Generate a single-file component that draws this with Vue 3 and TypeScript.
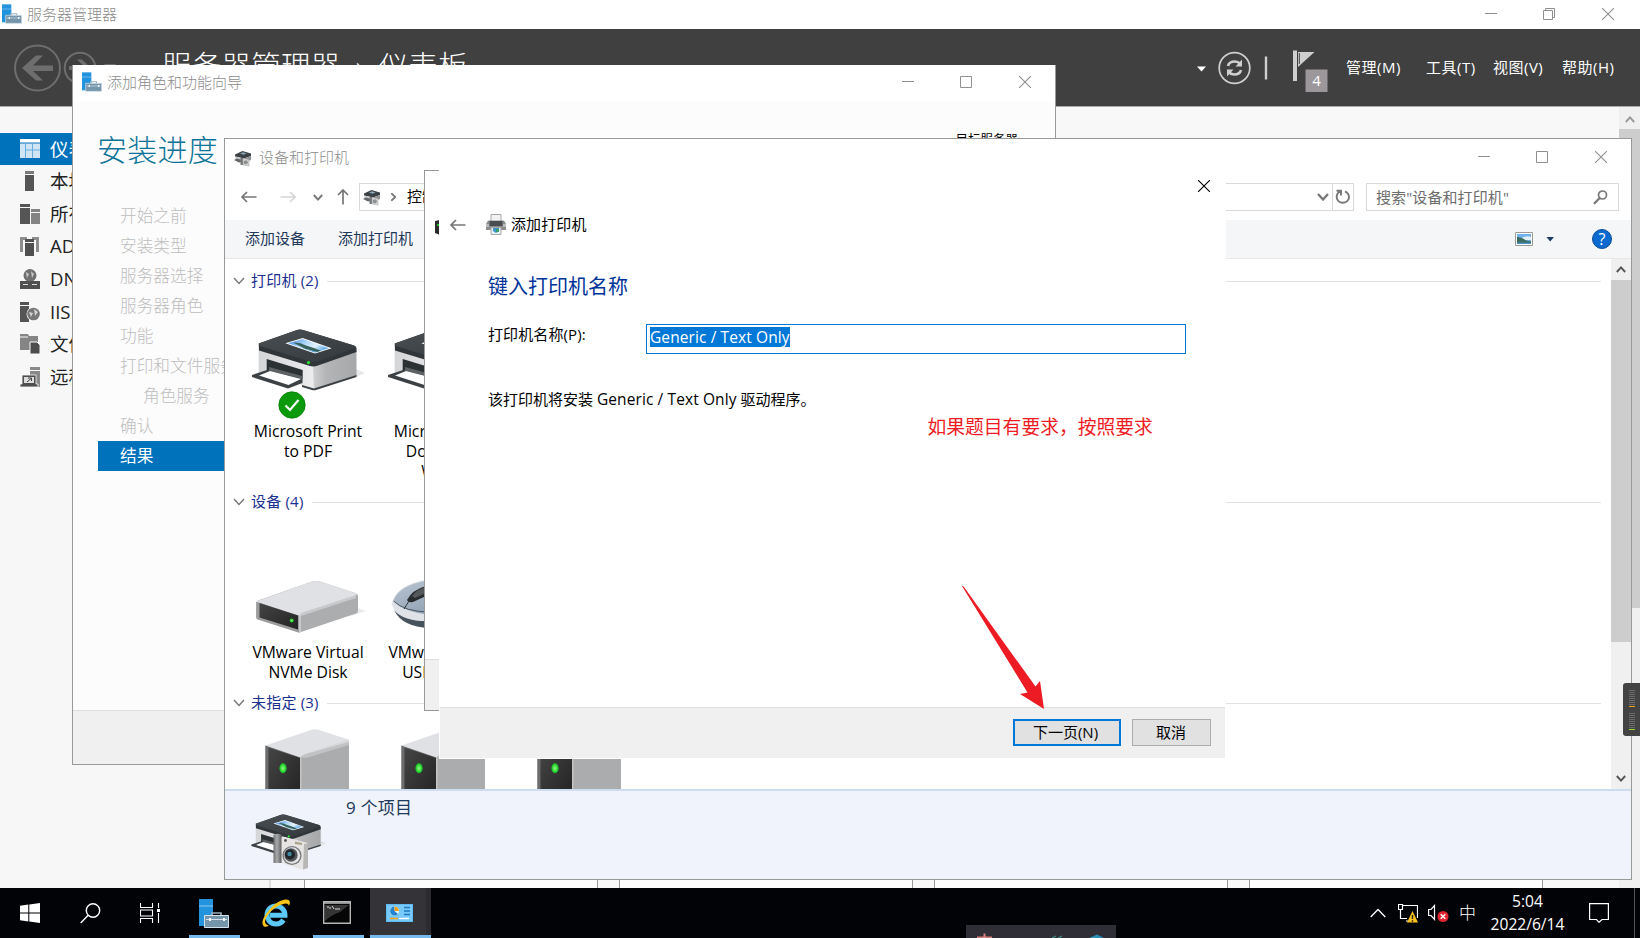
<script setup lang="ts">
import { ref } from 'vue'

interface NavItem { label: string; icon: string; active?: boolean }
interface Step { label: string; sub?: boolean; active?: boolean }
interface Device { icon: string; lines: string[]; isDefault?: boolean }
interface Group { id: string; title: string; devices: Device[] }

const navItems: NavItem[] = [
  { label: '仪表板', icon: 'dash', active: true },
  { label: '本地服务器', icon: 'local' },
  { label: '所有服务器', icon: 'all' },
  { label: 'AD DS', icon: 'ad' },
  { label: 'DNS', icon: 'dns' },
  { label: 'IIS', icon: 'iis' },
  { label: '文件和存储服务', icon: 'files' },
  { label: '远程桌面服务', icon: 'remote' },
]

const steps: Step[] = [
  { label: '开始之前' },
  { label: '安装类型' },
  { label: '服务器选择' },
  { label: '服务器角色' },
  { label: '功能' },
  { label: '打印和文件服务' },
  { label: '角色服务', sub: true },
  { label: '确认' },
  { label: '结果', active: true },
]

const groups: Group[] = [
  {
    id: 'printers',
    title: '打印机 (2)',
    devices: [
      { icon: 'printer', lines: ['Microsoft Print', 'to PDF'], isDefault: true },
      { icon: 'printer', lines: ['Microsoft XPS', 'Document', 'Writer'] },
    ],
  },
  {
    id: 'hardware',
    title: '设备 (4)',
    devices: [
      { icon: 'disk', lines: ['VMware Virtual', 'NVMe Disk'] },
      { icon: 'mouse', lines: ['VMware Virtual', 'USB Mouse'] },
    ],
  },
  {
    id: 'unspecified',
    title: '未指定 (3)',
    devices: [
      { icon: 'tower', lines: [] },
      { icon: 'tower', lines: [] },
      { icon: 'tower', lines: [] },
    ],
  },
]

const menus = ['管理(M)', '工具(T)', '视图(V)', '帮助(H)']
const printerName = ref('Generic / Text Only')
const iconHeights: Record<string, number> = { printer: 66, disk: 58, mouse: 58, tower: 64 }
</script>

<template>
  <div class="desktop">
    <svg class="defs" width="0" height="0">
      <defs>
        <linearGradient id="gTop" x1="0" y1="0" x2="1" y2="1">
          <stop offset="0" stop-color="#4a4f53" /><stop offset="1" stop-color="#32383b" />
        </linearGradient>
        <linearGradient id="gPhoto" x1="0" y1="0" x2="1" y2="0.4">
          <stop offset="0" stop-color="#3d86e0" /><stop offset="0.45" stop-color="#a9d4f8" />
          <stop offset="0.75" stop-color="#e4f3fd" /><stop offset="1" stop-color="#6db2e8" />
        </linearGradient>
        <linearGradient id="gFront" x1="0" y1="0" x2="1" y2="0">
          <stop offset="0" stop-color="#d4d5d6" /><stop offset="1" stop-color="#ececee" />
        </linearGradient>
        <linearGradient id="gSide" x1="0" y1="0" x2="1" y2="0">
          <stop offset="0" stop-color="#cfd0d2" /><stop offset="0.3" stop-color="#b4b5b7" /><stop offset="1" stop-color="#a6a7a9" />
        </linearGradient>
        <linearGradient id="gDark" x1="0" y1="0" x2="1" y2="1">
          <stop offset="0" stop-color="#454545" /><stop offset="1" stop-color="#222" />
        </linearGradient>
        <linearGradient id="gMouse" x1="0" y1="0" x2="1" y2="1">
          <stop offset="0" stop-color="#bac6d3" /><stop offset="1" stop-color="#7f92a8" />
        </linearGradient>
        <linearGradient id="gGrip" x1="0" y1="0" x2="1" y2="0">
          <stop offset="0" stop-color="#6d6e70" /><stop offset="0.4" stop-color="#a9aaab" /><stop offset="1" stop-color="#58595b" />
        </linearGradient>
        <radialGradient id="gLed"><stop offset="0" stop-color="#8dff7a" /><stop offset="1" stop-color="#0bc21a" /></radialGradient>
      </defs>
      <symbol id="printer" viewBox="250 326 116 66">
        <path d="M354 368L365 373L356 377L330 384Z" fill="#d9d9d9" opacity=".6" />
        <path d="M258.7 348L314 365V389L301 385V371L267 360V371L258.7 373Z" fill="url(#gFront)" />
        <path d="M313 365L356.5 350V376L314 389.5Z" fill="url(#gSide)" />
        <path d="M302 385L314 388.5L356.5 375V377L316 390Q314 390.5 312 390L302 387Z" fill="#3a4044" />
        <path d="M266.7 359L302.7 370V379L266.7 371Z" fill="#2c3134" />
        <path d="M269 367L302 376V379L269 371Z" fill="#5d6264" />
        <path d="M252 375L267 370L302.5 379V383L288 388.5L252 377Z" fill="#3b4145" />
        <path d="M259 375.5L270 371L301 379L288.5 385Z" fill="#fff" />
        <path d="M258.7 343.5L297 330Q300 329 303 330L354 345.5Q356.5 346.5 356.5 348V352L318 365.5Q314 367 310 366L259 350.5Z" fill="#2f3538" />
        <path d="M258.7 343.5L297 330Q300 329 303 330L354 345.5Q357 347 355 348L318 361.5Q314 362.5 310 361.5L260 346Z" fill="url(#gTop)" />
        <path d="M285.3 343.3L302.7 338L331.7 348.3L315 353.5Z" fill="#fff" />
        <path d="M288 343.2L302.6 339L329 348.2L315 352.4Z" fill="url(#gPhoto)" />
        <path d="M293 342.5Q300 342 306 345.5Q313 347.5 321 350.7L317 352L305 348.8Z" fill="#37635a" />
        <path d="M305 348.8L317 352L315 352.4L299 347Z" fill="#4c9bd8" />
        <circle cx="308.5" cy="362.6" r="1.6" fill="#2ee62e" />
      </symbol>
      <symbol id="photoset" viewBox="0 0 77 58">
        <use href="#printer" x="0" y="0" width="77" height="44" />
        <g transform="translate(0 2)">
          <path d="M23.5 21Q28 18.5 32 21V49H23.5Z" fill="url(#gGrip)" />
          <path d="M31.5 23.5Q33 22.5 35 23L56 28.5Q58 29.5 58 30.5V54L52 55.5L31.5 49Z" fill="#e6e5e3" />
          <path d="M54 30L58 29.5V54L53 55.5Z" fill="#b9b7b5" />
          <path d="M45 27.5L52 29V31L45 30Z" fill="#a9a288" />
          <circle cx="35.5" cy="26.5" r="1.4" fill="#555" />
          <circle cx="42" cy="41.5" r="9.6" fill="#77797c" /><circle cx="42" cy="41.5" r="8.2" fill="#e6e7e8" />
          <circle cx="41" cy="41" r="6.7" fill="#55585b" /><circle cx="40" cy="40.5" r="5" fill="#20262a" />
          <circle cx="39.5" cy="40" r="2.2" fill="#3e8ba0" />
        </g>
      </symbol>
      <symbol id="smallset" viewBox="0 0 18 18">
        <path d="M1 5.5L8.5 2L17 4.5V7L10 9.5L1 7.5Z" fill="#3b4145" />
        <path d="M6 4.5L9 3.3L12.5 4.5L9.5 5.8Z" fill="#8da7b8" />
        <path d="M1.5 7.5L10 9.5V13L1.5 10.5Z" fill="#c9cacb" />
        <path d="M10 9.5L17 7V11L10 13.5Z" fill="#909193" />
        <path d="M0 11L3 9.5L8 11V13L5 13.5Z" fill="#63676a" />
        <path d="M6.5 9H9V16H6.5Z" fill="#77787a" />
        <path d="M9 9.5L15 10.5V17L9 16Z" fill="#dedddb" stroke="#999" stroke-width=".5" />
        <circle cx="11.8" cy="13.3" r="2.1" fill="#8b8f91" />
      </symbol>
      <symbol id="disk" viewBox="250 578 116 58">
        <path d="M355 607L366 611L350 616Z" fill="#ddd" opacity=".6" />
        <path d="M256 603Q256 601 258 600.5L313 581.3Q316 580.5 319 581.3L355 593Q358 594 358 596V611Q358 613 356 613.6L301 632Q299 633 297 632L258 619.5Q256 619 256 617Z" fill="#acadaf" />
        <path d="M256 601.5L313 581.3Q316 580.5 319 581.3L356 593.3Q358 595 353 597.5L303 613.5Q300 615 299.5 617Z" fill="#e0e1e5" />
        <path d="M299 616Q300 613 304 612L356 595V598L301 616V632L299 632.5Z" fill="#c8c9cb" />
        <path d="M256.5 602L299 615.5V632.5L258 619.5Q256.5 619 256.5 617Z" fill="#9b9c9e" />
        <path d="M259.5 603L298 615.5V629.5L259.5 617.5Z" fill="url(#gDark)" />
        <circle cx="291.7" cy="620.5" r="2" fill="url(#gLed)" />
      </symbol>
      <symbol id="mouse" viewBox="386 574 116 58">
        <path d="M391.5 600Q396 580 430 575L480 590V624H424Q400 620 391.5 600Z" fill="#dfe3e8" />
        <path d="M394 606Q404 618 430 617V624Q402 623 394 606Z" fill="#46525c" />
        <path d="M393.5 597Q398 581 430 576L480 590V610H424Q400 606 393.5 597Z" fill="url(#gMouse)" />
        <path d="M393.5 597Q405 608 430 608" fill="none" stroke="#39434c" stroke-width=".8" />
        <path d="M409 597L404 605" stroke="#2f363c" stroke-width="1" />
        <path d="M407 596Q412 586 426 582V592L413 598Q408 599 407 596Z" fill="#292c2e" />
        <path d="M412 592Q416 586 426 583V589L415 594Z" fill="#55595c" />
      </symbol>
      <symbol id="tower" viewBox="250 727 116 64">
        <path d="M265.3 745.5L311 730Q315 728.5 319 730L347 739Q349 740 349 742V800H265.3Z" fill="#e0e1e4" />
        <path d="M300.5 757.5Q302 755 306 754L349 742V800H300.5Z" fill="#abacae" />
        <path d="M300.5 757.5Q302 755 306 753.5L349 739.5V745L306 758Z" fill="#cfd0d2" opacity=".6" />
        <path d="M265.3 745.5L300.5 757.5V800H265.3Z" fill="#6b6c6d" />
        <path d="M268.5 747.5L300 758V800H268.5Z" fill="url(#gDark)" />
        <path d="M300.8 757.5V800" stroke="#d8d8d8" stroke-width="1" />
        <ellipse cx="283" cy="768.3" rx="3.6" ry="5" fill="url(#gLed)" />
      </symbol>
      <symbol id="server" viewBox="0 0 30 29">
        <path d="M0 0H14V27H0Z" fill="#2493de" /><path d="M0 7H14" stroke="#8ec9f0" stroke-width="1" />
        <path d="M13 17V14H22V17" fill="none" stroke="#9db0bd" stroke-width="1.6" />
        <path d="M5.5 16.5H29.5V28.5H5.5Z" fill="#7595aa" stroke="#d3e2ec" />
        <path d="M7 20.5H28" stroke="#d3e2ec" stroke-width="1" /><path d="M10 19h2v3h-2zM24 19h2v3h-2z" fill="#f4f8fb" />
      </symbol>
      <symbol id="min" viewBox="0 0 12 12"><path d="M0 5.5H12" stroke="currentColor" /></symbol>
      <symbol id="max" viewBox="0 0 12 12"><path d="M.5.5H11.5V11.5H.5Z" fill="none" stroke="currentColor" /></symbol>
      <symbol id="restore" viewBox="0 0 12 12"><path d="M.5 2.5H9.5V11.5H.5ZM2.5 2.5V.5H11.5V9.5H9.5" fill="none" stroke="currentColor" /></symbol>
      <symbol id="close" viewBox="0 0 12 12"><path d="M0 0L12 12M12 0L0 12" stroke="currentColor" stroke-width="1.1" /></symbol>
      <symbol id="back" viewBox="0 0 16 12"><path d="M15.5 6H1M6 1L1 6L6 11" fill="none" stroke="currentColor" stroke-width="1.7" /></symbol>
      <symbol id="chev" viewBox="0 0 12 8"><path d="M1 1L6 6.5L11 1" fill="none" stroke="currentColor" stroke-width="1.4" /></symbol>
      <symbol id="chev-bold" viewBox="0 0 12 8"><path d="M1 1L6 6.5L11 1" fill="none" stroke="currentColor" stroke-width="2.3" /></symbol>
    </svg>

    <!-- Server Manager -->
    <section class="win manager">
      <header class="titlebar">
        <svg class="app-icon"><use href="#server" /></svg>
        <span>服务器管理器</span>
        <div class="controls">
          <svg><use href="#min" /></svg><svg><use href="#restore" /></svg><svg><use href="#close" /></svg>
        </div>
      </header>
      <div class="banner">
        <svg class="hist" width="120" height="60" viewBox="0 0 120 60">
          <g fill="none" stroke="#6e6e6e">
            <circle cx="37.5" cy="30" r="22.5" stroke-width="2" /><circle cx="80" cy="30" r="15.3" stroke-width="2" />
          </g>
          <path d="M22 30L36 17.5H43L33 27.5H53V33H33L43 42.5H36Z" fill="#6e6e6e" />
          <path d="M91 30L82 21.5H77L83.5 28H69V32H83L77 38.5H82Z" fill="#6e6e6e" />
          <path d="M104 26H116L110 32Z" fill="#6e6e6e" />
        </svg>
        <h1>服务器管理器<i>›</i>仪表板</h1>
        <svg class="tools" width="140" height="60" viewBox="0 0 140 60">
          <path d="M7 28.5H16L11.5 33.5Z" fill="#fff" />
          <circle cx="44.5" cy="30" r="15.3" fill="none" stroke="#cfcfcf" stroke-width="1.7" />
          <g fill="none" stroke="#cfcfcf" stroke-width="2.6">
            <path d="M38 28Q39 23.5 45 23.5Q48 23.5 50.5 26M51 32Q50 36.5 44 36.5Q41 36.5 38.5 34" />
          </g>
          <path d="M52 21.5V28.5H45.5ZM37 38.5V31.5H43.5Z" fill="#cfcfcf" />
          <path d="M76 18.5V41.5" stroke="#cfcfcf" stroke-width="2.4" />
          <path d="M103 12.5H107V43H103ZM108 14H124.5L108 29Z" fill="#cfcfcf" /><path d="M109.3 15V26" stroke="#404040" stroke-width="1" />
          <path d="M115.5 31.5H137.5V54H115.5Z" fill="#9b979b" />
          <text x="126.5" y="48" text-anchor="middle" font-size="15" fill="#fff">4</text>
        </svg>
        <nav class="menus"><span v-for="m in menus" :key="m">{{ m }}</span></nav>
      </div>
      <div class="manager-body">
        <ul class="sidebar">
          <li v-for="item in navItems" :key="item.label" :class="{ active: item.active }">
            <svg width="20" height="20" viewBox="0 0 20 20">
              <g v-if="item.icon === 'dash'"><path d="M0 0H20V3.5H0Z" fill="#fff" /><path d="M0 4.5H20V19H0Z" fill="#cfe4f5" /><path d="M5.5 4.5V19M12.5 4.5V19M5.5 11H20" stroke="#67aee0" /></g>
              <g v-else-if="item.icon === 'local'"><path d="M5 0H14V3H5Z" fill="#7a7a7a" /><path d="M5 4H14V20H5Z" fill="#555" /></g>
              <g v-else-if="item.icon === 'all'"><path d="M0 0H10V3H0Z M0 4H10V20H0Z" fill="#555" /><path d="M11 5H20V8H11ZM11 9H20V20H11Z" fill="#848484" /></g>
              <g v-else-if="item.icon === 'ad'"><path d="M0 1H7V4H3V16H0ZM12 1H19V16H16V4H12Z" fill="#8d8d8d" /><path d="M5 3H14V6H5ZM5 7H14V20H5Z" fill="#4f4f4f" /></g>
              <g v-else-if="item.icon === 'dns'"><circle cx="10" cy="6.5" r="6.5" fill="#707070" /><path d="M6 3L9 5L7 9ZM11 2L14 5L12 9Z" fill="#c9c9c9" /><path d="M0 12H20V20H0Z" fill="#505050" /><path d="M3 15.5H8M12 15.5H17" stroke="#ddd" /></g>
              <g v-else-if="item.icon === 'iis'"><path d="M0 0H9V3H0ZM0 4H9V20H0Z" fill="#555" /><circle cx="13.5" cy="12" r="7" fill="#f7f7f7" /><circle cx="13.5" cy="12" r="6.3" fill="#777" /><path d="M9 10L13 11L11 15ZM14 7L18 10L15 14Z" fill="#d2d2d2" /></g>
              <g v-else-if="item.icon === 'files'"><path d="M0 0H8L9 2H18V16H0Z" fill="#858585" /><path d="M0 3H8" stroke="#f7f7f7" /><path d="M10 8H17L20 11V20H10Z" fill="#4d4d4d" stroke="#f7f7f7" /></g>
              <g v-else><path d="M10 0H20V3H10ZM10 4H20V20H10Z" fill="#8a8a8a" /><path d="M2 8H16V17H18V20H0V17H2Z" fill="#4f4f4f" stroke="#f7f7f7" stroke-width=".8" /><path d="M4 10H14V16H4Z" fill="#ddd" /><path d="M7 15L11 11.5M8 11H11.5V14" stroke="#444" fill="none" /></g>
            </svg>
            <span>{{ item.label }}</span>
          </li>
        </ul>
        <div class="tiles"><div v-for="n in 4" :key="n" class="tile"></div></div>
        <div class="scroll manager-scroll"><svg class="arrow up light"><use href="#chev-bold" /></svg><div class="thumb"></div></div>
      </div>
    </section>

    <!-- Add roles wizard -->
    <section class="win wizard">
      <header class="titlebar">
        <svg class="app-icon"><use href="#server" /></svg>
        <span>添加角色和功能向导</span>
        <div class="controls">
          <svg><use href="#min" /></svg><svg><use href="#max" /></svg><svg><use href="#close" /></svg>
        </div>
      </header>
      <div class="wizard-head"><h2>安装进度</h2><span>目标服务器</span></div>
      <ol class="steps">
        <li v-for="s in steps" :key="s.label" :class="{ sub: s.sub, active: s.active }">{{ s.label }}</li>
      </ol>
      <footer></footer>
    </section>

    <!-- Devices and printers -->
    <section class="win explorer">
      <header class="titlebar">
        <svg class="app-icon"><use href="#smallset" /></svg>
        <span>设备和打印机</span>
        <div class="controls">
          <svg><use href="#min" /></svg><svg><use href="#max" /></svg><svg><use href="#close" /></svg>
        </div>
      </header>
      <div class="navrow">
        <svg class="nb"><use href="#back" /></svg>
        <svg class="nb fwd"><use href="#back" /></svg>
        <svg class="recent"><use href="#chev-bold" /></svg>
        <svg class="nb upward"><use href="#back" /></svg>
        <div class="address">
          <svg class="loc"><use href="#smallset" /></svg>
          <svg class="sep"><use href="#chev-bold" /></svg>
          <span>控制面板</span>
          <svg class="drop"><use href="#chev-bold" /></svg>
          <div class="refresh">
            <svg width="16" height="16" viewBox="0 0 16 16"><path d="M5 2.5Q1.5 4.5 1.7 8.3A6.2 6.2 0 0 0 14 8.5Q14 4 10 2.3M1.5 1.8H6V6.5" fill="none" stroke="#777" stroke-width="1.9" /></svg>
          </div>
        </div>
        <div class="search">
          <span>搜索"设备和打印机"</span>
          <svg width="15" height="15" viewBox="0 0 15 15"><circle cx="9.5" cy="5" r="4" fill="none" stroke="#777" stroke-width="1.7" /><path d="M6.7 8L1 13.7" stroke="#777" stroke-width="2.3" /></svg>
        </div>
      </div>
      <div class="commands">
        <span>添加设备</span><span>添加打印机</span>
        <svg class="cmd-icons" width="100" height="24" viewBox="0 0 100 24">
          <path d="M2.5 5.5H19.5V18.5H2.5Z" fill="#fff" stroke="#999" />
          <path d="M4 7H18V17H4Z" fill="#6fb1ee" /><path d="M9 11Q14 8 18 10V13H9Z" fill="#dff0fc" /><path d="M4 10Q9 10 13 13.5L18 14.5V16H4Z" fill="#3a6c62" /><path d="M4 15.5H18V17H4Z" fill="#4c8fc0" />
          <path d="M33.5 10H41L37.2 14.5Z" fill="#1c3a63" />
          <circle cx="89" cy="12" r="9.5" fill="#0a6ad0" stroke="#0b4d96" />
          <text x="89" y="17.5" text-anchor="middle" font-size="16" fill="#fff">?</text>
        </svg>
      </div>
      <div class="content">
        <div class="list">
          <div v-for="g in groups" :key="g.id" class="group" :class="g.id">
            <div class="group-head"><svg><use href="#chev" /></svg><span>{{ g.title }}</span><hr /></div>
            <div class="items">
              <div v-for="(d, i) in g.devices" :key="i" class="item">
                <div class="pic">
                  <svg width="116" :height="iconHeights[d.icon]"><use :href="'#' + d.icon" width="116" :height="iconHeights[d.icon]" /></svg>
                  <svg v-if="d.isDefault" class="badge" viewBox="0 0 28 28"><circle cx="14" cy="14" r="13.2" fill="#0c9a0c" stroke="#067d06" stroke-width=".8" /><path d="M7.5 14.5L12 19L20.5 9" fill="none" stroke="#fff" stroke-width="2.2" /></svg>
                </div>
                <p v-for="l in d.lines" :key="l">{{ l }}</p>
              </div>
            </div>
          </div>
        </div>
        <div class="scroll list-scroll">
          <svg class="arrow up"><use href="#chev-bold" /></svg><div class="thumb"></div><svg class="arrow"><use href="#chev-bold" /></svg>
        </div>
      </div>
      <footer class="details">
        <svg width="77" height="58"><use href="#photoset" /></svg>
        <span>9 个项目</span>
      </footer>
    </section>

    <!-- Parent dialog, mostly covered -->
    <section class="win under-dialog">
      <svg class="under-icon" width="5" height="15" viewBox="0 0 5 15"><path d="M0 1L5 0V15L0 13Z" fill="#2b2b2b" /><path d="M2 4h2v2h-2z" fill="#25c32b" /></svg>
      <footer></footer>
    </section>

    <!-- Add printer dialog -->
    <section class="win dialog">
      <svg class="dlg-close"><use href="#close" /></svg>
      <header>
        <svg class="nb"><use href="#back" /></svg>
        <svg class="dlg-icon" width="20" height="21" viewBox="0 0 20 21">
          <path d="M5 .5H15V8H5Z" fill="#f3f3f3" stroke="#a7a7a7" />
          <path d="M2 6.5H18L20 10V16H0V10Z" fill="#8b8d8f" /><path d="M3.5 7H16.5V12H3.5Z" fill="#4a4d50" /><path d="M0 10H3V13H0ZM17 10H20V13H17Z" fill="#b9babb" />
          <path d="M5 13.5H15V20.5H5Z" fill="#e8f1f6" stroke="#a7a7a7" /><path d="M7 14H13V17L10 19L7 17Z" fill="#3b95cc" /><path d="M10 15h3v3h-3z" fill="#3c9d6c" />
        </svg>
        <span>添加打印机</span>
      </header>
      <h3>键入打印机名称</h3>
      <div class="field">
        <label>打印机名称(P):</label>
        <div class="input"><mark>{{ printerName }}</mark></div>
      </div>
      <p class="hint">该打印机将安装 <b>{{ printerName }}</b> 驱动程序。</p>
      <footer>
        <button class="primary">下一页(N)</button>
        <button>取消</button>
      </footer>
    </section>

    <!-- Annotations -->
    <p class="note">如果题目有要求，按照要求</p>
    <svg class="red-arrow" width="90" height="130" viewBox="0 0 90 130"><path d="M2 6Q3 5.5 4 7L75.5 106.5L80 101L84 129L60 114L67.5 112.5Z" fill="#ed1c24" /></svg>
    <div class="meter">
      <div class="bars"></div><div class="bars green"></div>
    </div>

    <!-- Taskbar -->
    <div class="taskbar">
      <div class="tb"><svg width="20" height="20" viewBox="0 0 20 20"><path d="M0 2.8L8.3 1.6V9.5H0ZM9.3 1.4L20 0V9.5H9.3ZM0 10.5H8.3V18.4L0 17.2ZM9.3 10.5H20V20L9.3 18.6Z" fill="#fff" /></svg></div>
      <div class="tb"><svg width="21" height="21" viewBox="0 0 21 21"><circle cx="13" cy="7.5" r="6.7" fill="none" stroke="#fff" stroke-width="1.4" /><path d="M8.2 12.3L.7 20" stroke="#fff" stroke-width="1.4" /></svg></div>
      <div class="tb"><svg width="20" height="20" viewBox="0 0 20 20"><path d="M.5 0V4.5H12.5V0M.5 20V15.5H12.5V20M.5 7H12.5V13H.5ZM18.5 0V5M18.5 10V20" fill="none" stroke="#fff" stroke-width="1.1" /><path d="M17 6H20V9H17Z" fill="#fff" /></svg></div>
      <div class="tb app run first"><svg width="30" height="29"><use href="#server" /></svg></div>
      <div class="tb app"><svg width="30" height="29" viewBox="0 0 30 29">
        <path d="M22.5 21A9 9 0 1 1 24 16.2H9" fill="none" stroke="#5cc8f5" stroke-width="5" />
        <path d="M3 27.5Q-1 24 5 15Q14 2 24 .5Q31 0 28 7Q27.5 2.5 19 6Q9 11 5 19Q2 25 8 26.5Q5 28.5 3 27.5Z" fill="#f8c517" />
      </svg></div>
      <div class="tb app run cmd"><svg width="28" height="23" viewBox="0 0 28 23"><path d="M.7.7H27.3V22.3H.7Z" fill="#060606" stroke="#b5b5b5" stroke-width="1.4" /><path d="M1 2H27" stroke="#bbb" stroke-width="1.5" /><path d="M2 4H26L17 11Q8 14 2 20Z" fill="#353535" /><path d="M4 6h2M7 6v2M9 5l2 3M12 8h5" stroke="#ddd" /></svg></div>
      <div class="tb app run active"><svg width="27" height="18" viewBox="0 0 27 18"><path d="M0 0H27V18H0Z" fill="#5dbaf2" /><path d="M1 1H26V17H1Z" fill="#77caf7" /><circle cx="8.5" cy="7" r="4.5" fill="#eaf7ff" /><path d="M8.5 7V2.5A4.5 4.5 0 1 0 12 10Z" fill="#2483cf" /><path d="M8.5 7V2.5A4.5 4.5 0 0 1 13 7Z" fill="#f6a21c" /><path d="M18 3.5H24M18 7H24M18 10.5H24" stroke="#1e78c5" stroke-width="1.3" /><path d="M4 14.5H12" stroke="#f6a21c" stroke-width="1.6" /><path d="M13 14.5H23" stroke="#fff" stroke-width="1.4" /></svg></div>
      <div class="ime"><svg width="150" height="13" viewBox="0 0 150 13"><path d="M11 12.5H26M18.5 8.5V13" stroke="#d98080" stroke-width="2" /><path d="M86 13L90 11M92 13L96 11" stroke="#3c8a80" stroke-width="1.3" /><path d="M123 13L131 9.5L138 13Z" fill="#2a8fb5" /></svg></div>
      <div class="tray">
        <svg width="16" height="10" viewBox="0 0 16 10"><path d="M.7 9L8 1.5L15.3 9" fill="none" stroke="#fff" stroke-width="1.3" /></svg>
        <svg class="net" width="20" height="19" viewBox="0 0 20 19"><path d="M5 1.5H19.5V14M2.5 6V14.5H9M8 17H13M.5.5H4.5V5.5H.5Z" fill="none" stroke="#fff" stroke-width="1.2" /><path d="M14.5 7L20 18.5H9Z" fill="#f8c21a" /><path d="M14.5 11V15M14.5 16.2V17.7" stroke="#222" stroke-width="1.4" /></svg>
        <svg class="vol" width="21" height="19" viewBox="0 0 21 19"><path d="M.6 5.5H3L6.5 1.5V15.5L3 11.5H.6Z" fill="none" stroke="#fff" stroke-width="1.2" /><circle cx="15" cy="12.5" r="5.5" fill="#dd2430" /><path d="M12.7 10.2L17.3 14.8M17.3 10.2L12.7 14.8" stroke="#fff" stroke-width="1.4" /></svg>
        <span class="lang">中</span>
        <div class="clock"><span>5:04</span><span>2022/6/14</span></div>
        <svg width="20" height="20" viewBox="0 0 20 20"><path d="M.6.6H19.4V16.5H13L10 19.3L7.5 16.5H.6Z" fill="none" stroke="#fff" stroke-width="1.2" /></svg>
      </div>
    </div>
  </div>
</template>

<style>
html, body { margin: 0; background: #000; overflow: hidden; }
</style>

<style scoped>
.desktop { position: relative; width: 1640px; height: 938px; overflow: hidden; font-family: "Open Sans", "Noto Sans CJK SC", sans-serif; font-size: 15px; line-height: 20px; color: #000; }
.desktop * { box-sizing: border-box; }
h1, h2, h3, p, ul, ol { margin: 0; padding: 0; font-weight: 400; list-style: none; }
.defs { position: absolute; }
svg { flex: none; display: block; }
span, p, li, label, h1, h2, h3 { white-space: nowrap; }
.win { position: absolute; display: flex; flex-direction: column; background: #fff; }

.titlebar { display: flex; align-items: center; color: #8c8c8c; font-weight: 300; flex: none; }
.titlebar .controls { margin-left: auto; display: flex; gap: 46px; color: #8f8f8f; }
.controls svg { width: 12px; height: 12px; overflow: visible; }
.controls svg:last-child { margin-left: 1px; }
.app-icon { width: 20px; height: 20px; }

.manager { left: 0; top: 0; width: 1640px; height: 888px; }
.manager > .titlebar { height: 29px; padding: 0 26px 2px 2px; }
.manager > .titlebar .app-icon { margin-right: 5px; }
.banner { height: 78px; background: #404040; border-bottom: 1px solid #aaa; display: flex; align-items: center; flex: none; color: #fff; }
.hist { margin-right: 42px; }
.banner h1 { font-size: 29.5px; line-height: 40px; font-weight: 300; flex: 1; padding-bottom: 3px; letter-spacing: .25px; }
.banner h1 i { font-style: normal; display: inline-block; width: 38px; text-align: center; }
.tools { margin-right: 16px; flex: none; }
.menus { display: grid; grid-template-columns: 80px 67px 69px 78px; width: 294px; padding-bottom: 1px; letter-spacing: .5px; }
.manager-body { flex: 1; display: flex; background: #f8f8f8; min-height: 0; }
.sidebar { width: 269px; padding-top: 26px; background: #f7f7f7; flex: none; }
.sidebar li { height: 32.6px; display: flex; align-items: center; gap: 10px; padding-left: 20px; font-size: 18.5px; color: #222; }
.sidebar li.active { background: #0072bc; color: #fff; height: 32px; }
.tiles { flex: 1; display: flex; gap: 21px; align-items: flex-end; border-left: 2px solid #ddd; padding-left: 33px; }
.tile { width: 294px; height: 700px; background: #fdfdfd; border: 1px solid #999; border-width: 0 1px; flex: none; }
.scroll { display: flex; flex-direction: column; align-items: center; background: #f0f0f0; flex: none; }
.arrow { width: 10px; height: 7px; color: #555; overflow: visible; }
.arrow.up { transform: rotate(180deg); }
.arrow.light { color: #999; }
.scroll .thumb { width: 100%; background: #cdcdcd; }
.manager-scroll { width: 21px; padding-top: 9px; }
.manager-scroll .thumb { margin-top: 6px; height: 479px; }

.wizard { left: 72px; top: 65px; width: 984px; height: 700px; border: 1px solid #999; border-top: 0; background: #fcfcfc; }
.wizard .titlebar { height: 37px; background: #fff; padding: 0 24px 3px 9px; }
.wizard .app-icon { margin-right: 5px; }
.wizard-head { display: flex; justify-content: space-between; height: 98px; padding: 26px 37px 0 24px; flex: none; }
.wizard-head h2 { font-size: 30px; line-height: 44px; color: #0b7398; font-weight: 300; letter-spacing: .25px; }
.wizard-head span { font-size: 12.5px; margin-top: 2px; }
.steps { margin-left: 25px; flex: 1; }
.steps li { height: 30px; line-height: 32px; padding-left: 22px; font-size: 16.7px; color: #bebebe; font-weight: 300; }
.steps li.sub { padding-left: 45px; }
.steps li.active { background: #0072bc; color: #fff; font-weight: 400; line-height: 30px; margin-top: 1px; }
.wizard footer { height: 54px; background: #f0f0f0; border-top: 1px solid #dfdfdf; }

.explorer { left: 224px; top: 138px; width: 1408px; height: 742px; border: 1px solid #999; }
.explorer .titlebar { height: 37px; padding: 0 24px 1px 9px; }
.explorer .titlebar .app-icon { width: 18px; height: 18px; margin: 2px 7px 0 0; }
.navrow { display: flex; align-items: center; height: 44px; padding: 0 12px 2px 16px; flex: none; color: #777; }
.nb { width: 16px; height: 12px; flex: none; }
.nb.fwd { transform: rotate(180deg); color: #d5d5d5; margin-left: 23px; }
.nb.upward { transform: rotate(90deg); margin-left: 12px; }
.recent { width: 10px; height: 7px; margin-left: 17px; }
.address { display: flex; align-items: center; height: 28px; border: 1px solid #d9d9d9; margin-left: 8px; width: 995px; padding-left: 3px; flex: none; }
.address .loc { width: 18px; height: 18px; }
.address .sep { width: 9px; height: 6px; transform: rotate(-90deg); margin: 0 9px 0 8px; }
.address span { color: #000; padding-bottom: 2px; }
.address .drop { width: 12px; height: 8px; margin-left: auto; margin-right: 3px; }
.refresh { width: 21px; height: 26px; border-left: 1px solid #d9d9d9; display: flex; align-items: center; justify-content: center; }
.search { display: flex; align-items: center; justify-content: space-between; height: 28px; width: 253px; border: 1px solid #d9d9d9; margin-left: auto; padding: 0 10px 0 9px; color: #6d6d6d; letter-spacing: .1px; }
.commands { height: 39px; background: #f5f6f8; border-bottom: 1px solid #e6e7e9; display: flex; align-items: center; padding: 0 18px 0 20px; gap: 33px; color: #1e395b; flex: none; }
.commands span { padding-bottom: 2px; }
.cmd-icons { margin-left: auto; }
.content { flex: 1; display: flex; min-height: 0; }
.list { flex: 1; overflow: hidden; }
.group { overflow: hidden; }
.group.printers { height: 221px; }
.group.hardware { height: 201px; }
.group.unspecified { height: 110px; }
.group-head { display: flex; align-items: center; height: 44px; padding: 0 10px 0 8px; color: #1b2f8f; }
.group-head svg { width: 12px; height: 8px; color: #777; margin-right: 6px; }
.group-head span { padding-bottom: 2px; letter-spacing: .2px; }
.group-head hr { flex: 1; border: 0; border-top: 1px solid #e2e2e2; margin: 0 0 0 8px; }
.items { display: grid; grid-template-columns: repeat(3, 136px); padding-left: 15px; }
.item { text-align: center; font-size: 15.7px; }
.pic { position: relative; display: flex; justify-content: center; align-items: flex-start; }
.printers .pic { padding-top: 23px; height: 117.6px; }
.hardware .pic { padding-top: 54px; height: 117.6px; }
.unspecified .pic { padding-top: 2px; }
.badge { position: absolute; left: 37.5px; top: 88px; width: 28px; height: 28px; }
.list-scroll { width: 20px; padding: 7px 0; }
.list-scroll .thumb { margin: 7px 0 auto; height: 362px; }
.details { height: 90px; background: #f0f3fb; border-top: 2px solid #cddcee; display: flex; padding: 21px 0 0 25px; flex: none; }
.details span { font-size: 17px; color: #1e395b; margin: -14px 0 0 19px; height: 20px; letter-spacing: .2px; }

.under-dialog { left: 424px; top: 170px; width: 17px; height: 541px; border: 1px solid #999; border-right: 0; justify-content: space-between; }
.under-icon { margin: 49px 0 0 10px; }
.under-dialog footer { height: 51px; background: #f0f0f0; border-top: 1px solid #dfdfdf; }

.dialog { left: 439px; top: 160px; width: 787px; height: 599px; padding: 0 1px 1px; }
.dlg-close { position: absolute; left: 759px; top: 20px; width: 12px; height: 12px; overflow: visible; }
.dialog header { display: flex; align-items: center; margin-top: 54px; height: 21px; padding-left: 10px; flex: none; }
.dialog header .nb { color: #777; }
.dialog header span { padding-bottom: 2px; letter-spacing: .1px; }
.dlg-icon { margin: 0 5px 0 20px; }
.dialog h3 { margin: 38px 0 0 48px; font-size: 20px; line-height: 28px; color: #003399; }
.field { display: flex; align-items: flex-start; padding-left: 48px; margin-top: 23px; letter-spacing: .1px; }
.field label { width: 158px; }
.input { width: 540px; height: 30px; border: 1px solid #0078d7; padding: 2px 3px; }
.input mark { display: inline-block; background: #0078d7; color: #fff; line-height: 20px; width: 140px; font-size: 15.5px; white-space: nowrap; }
.hint { margin: 35px 0 0 48px; }
.hint b { font-weight: 400; font-size: 15.5px; letter-spacing: .1px; }
.dialog footer { margin-top: auto; height: 51px; background: #f0f0f0; border-top: 1px solid #dfdfdf; display: flex; justify-content: flex-end; gap: 11px; padding: 11px 14px 0 0; }
.dialog button { width: 79px; height: 27px; background: #e1e1e1; border: 1px solid #adadad; font: inherit; color: #000; padding: 0 1px 1px 0; }
.dialog button.primary { width: 108px; border: 2px solid #0078d7; padding-right: 3px; }

.note { position: absolute; left: 927.5px; top: 413px; font-size: 18.8px; line-height: 28px; color: #ed1c24; }
.red-arrow { position: absolute; left: 960px; top: 580px; }
.meter { position: absolute; left: 1623px; top: 683px; width: 17px; height: 53px; background: #434343; border-radius: 3px 0 0 3px; display: flex; flex-direction: column; gap: 6px; padding: 7px 0 0 6px; }
.bars { width: 6px; height: 17px; background: repeating-linear-gradient(#6a6a6a 0 1px, #434343 1px 2px); border-bottom: 1px solid #f39c1f; }
.bars.green { border-color: #8fdc3c; }

.taskbar { position: absolute; left: 0; top: 888px; width: 1640px; height: 50px; background: #010307; display: flex; color: #fff; }
.tb { width: 60px; height: 50px; display: flex; align-items: center; justify-content: center; flex: none; }
.tb.app { width: 51px; border-bottom: 3px solid transparent; padding: 3px 2px 0 0; margin-left: 11px; }
.tb.first { margin-left: 9px; }
.tb.run { border-bottom-color: #76b9ed; }
.tb.cmd { padding-right: 4px; padding-top: 2px; }
.tb.app.active { width: 61px; margin-left: 6px; background: #333338; box-shadow: inset -5px 0 #2b2b30; padding-right: 3px; }
.ime { position: absolute; left: 966px; bottom: 0; width: 150px; height: 13px; background: #2f2d36; }
.tray { margin-left: auto; display: flex; align-items: center; width: 271px; border-right: 1px solid #555; margin-right: 5px; padding-left: 6px; }
.net { margin-left: 12px; }
.vol { margin-left: 10px; }
.lang { font-size: 17px; margin-left: 10px; font-weight: 300; width: 17px; padding-bottom: 1px; }
.clock { display: flex; flex-direction: column; align-items: center; width: 102px; line-height: 23px; font-size: 15.6px; padding-left: 1px; margin-right: 11px; }
</style>
